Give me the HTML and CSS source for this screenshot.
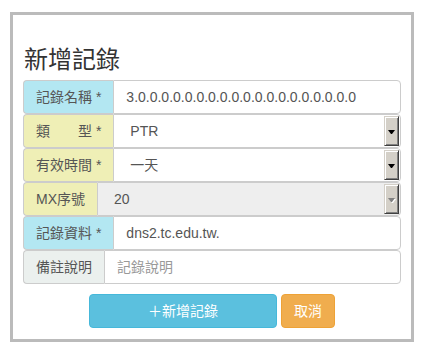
FILE: index.html
```html
<!DOCTYPE html>
<html lang="zh-Hant">
<head>
    <meta charset="UTF-8">
    <title>新增記錄</title>
    <link rel="stylesheet" href="styles.css">
</head>
<body>

    <div class="panel">
        <h3 class="title">新增記錄</h3>

        <form class="record-form">
            <div class="input-group">
                <span class="addon addon-blue">記錄名稱 *</span>
                <input class="form-control" type="text" value="3.0.0.0.0.0.0.0.0.0.0.0.0.0.0.0.0.0.0.0">
            </div>

            <div class="input-group">
                <span class="addon addon-yellow">類　　型 *</span>
                <div class="select-box">
                    <select class="form-select"><option>PTR</option></select>
                    <span class="drop"><span class="caret"></span></span>
                </div>
            </div>

            <div class="input-group">
                <span class="addon addon-yellow">有效時間 *</span>
                <div class="select-box">
                    <select class="form-select"><option>一天</option></select>
                    <span class="drop"><span class="caret"></span></span>
                </div>
            </div>

            <div class="input-group">
                <span class="addon addon-yellow">MX序號</span>
                <div class="select-box disabled">
                    <select class="form-select" disabled><option>20</option></select>
                    <span class="drop"><span class="caret"></span></span>
                </div>
            </div>

            <div class="input-group">
                <span class="addon addon-blue">記錄資料 *</span>
                <input class="form-control" type="text" value="dns2.tc.edu.tw.">
            </div>

            <div class="input-group">
                <span class="addon addon-gray">備註說明</span>
                <input class="form-control" type="text" placeholder="記錄說明">
            </div>
        </form>

        <div class="actions">
            <button class="btn btn-info btn-wide" type="button">＋新增記錄</button>
            <button class="btn btn-warning" type="button">取消</button>
        </div>
    </div>

</body>
</html>
```

FILE: styles.css
```css
body {
    margin: 0;
    font-family: "Liberation Sans", "Noto Sans CJK TC", sans-serif;
    font-size: 14px;
    color: #333;
    background: #fff;
}
.panel {
    box-sizing: border-box;
    width: 404px;
    height: 330px;
    margin: 12px 0 0 10px;
    padding: 0 10px;
    border: 3px solid #bbb;
}
.title {
    margin: 32px 0 7px 1px;
    font-size: 24px;
    font-weight: normal;
    line-height: 1.1;
    color: #333;
}
.input-group {
    display: flex;
    height: 34px;
}
.addon {
    box-sizing: border-box;
    padding: 6px 12px;
    line-height: 20px;
    color: #555;
    white-space: nowrap;
    border: 1px solid #ccc;
    border-right: 0;
    border-radius: 4px 0 0 4px;
}
.addon-blue {
    background: #b3e7f2;
}
.addon-yellow {
    background: #efefb6;
}
.addon-gray {
    background: #ebf0ee;
}
.form-control {
    flex: 1;
    min-width: 0;
    box-sizing: border-box;
    padding: 6px 12px;
    font: inherit;
    color: #555;
    border: 1px solid #ccc;
    border-radius: 0 4px 4px 0;
    outline: none;
}
.form-control::placeholder {
    color: #999;
}
.select-box {
    flex: 1;
    display: flex;
    box-sizing: border-box;
    padding: 1px;
    background: #fff;
    border: 1px solid #ccc;
    border-radius: 0 4px 4px 0;
}
.select-box.disabled {
    background: #eee;
}
.form-select {
    flex: 1;
    min-width: 0;
    padding: 0 0 0 15px;
    font: inherit;
    color: #555;
    background: transparent;
    border: 0;
    outline: none;
    appearance: none;
    -webkit-appearance: none;
}
.select-box.disabled .form-select {
    opacity: 1;
    color: #555;
}
.drop {
    box-sizing: border-box;
    width: 15px;
    display: flex;
    align-items: center;
    justify-content: center;
    background: #d4d0c8;
    border: 1px solid;
    border-color: #d4d0c8 #404040 #404040 #d4d0c8;
    box-shadow: inset 1px 1px #fff, inset -1px -1px #808080;
}
.caret {
    width: 1px;
    height: 0;
    border-top: 4px solid #000;
    border-left: 3px solid transparent;
    border-right: 3px solid transparent;
    margin-top: 1px;
}
.disabled .caret {
    border-top-color: #808080;
    filter: drop-shadow(1px 1px 0 #fff);
}
.actions {
    margin-top: 10px;
    text-align: center;
}
.btn {
    box-sizing: border-box;
    height: 34px;
    padding: 6px 12px;
    font: inherit;
    line-height: 20px;
    color: #fff;
    border: 1px solid;
    border-radius: 4px;
    cursor: pointer;
}
.btn-wide {
    width: 188px;
}
.btn-info {
    background: #5bc0de;
    border-color: #46b8da;
}
.btn-warning {
    background: #f0ad4e;
    border-color: #eea236;
}
```
